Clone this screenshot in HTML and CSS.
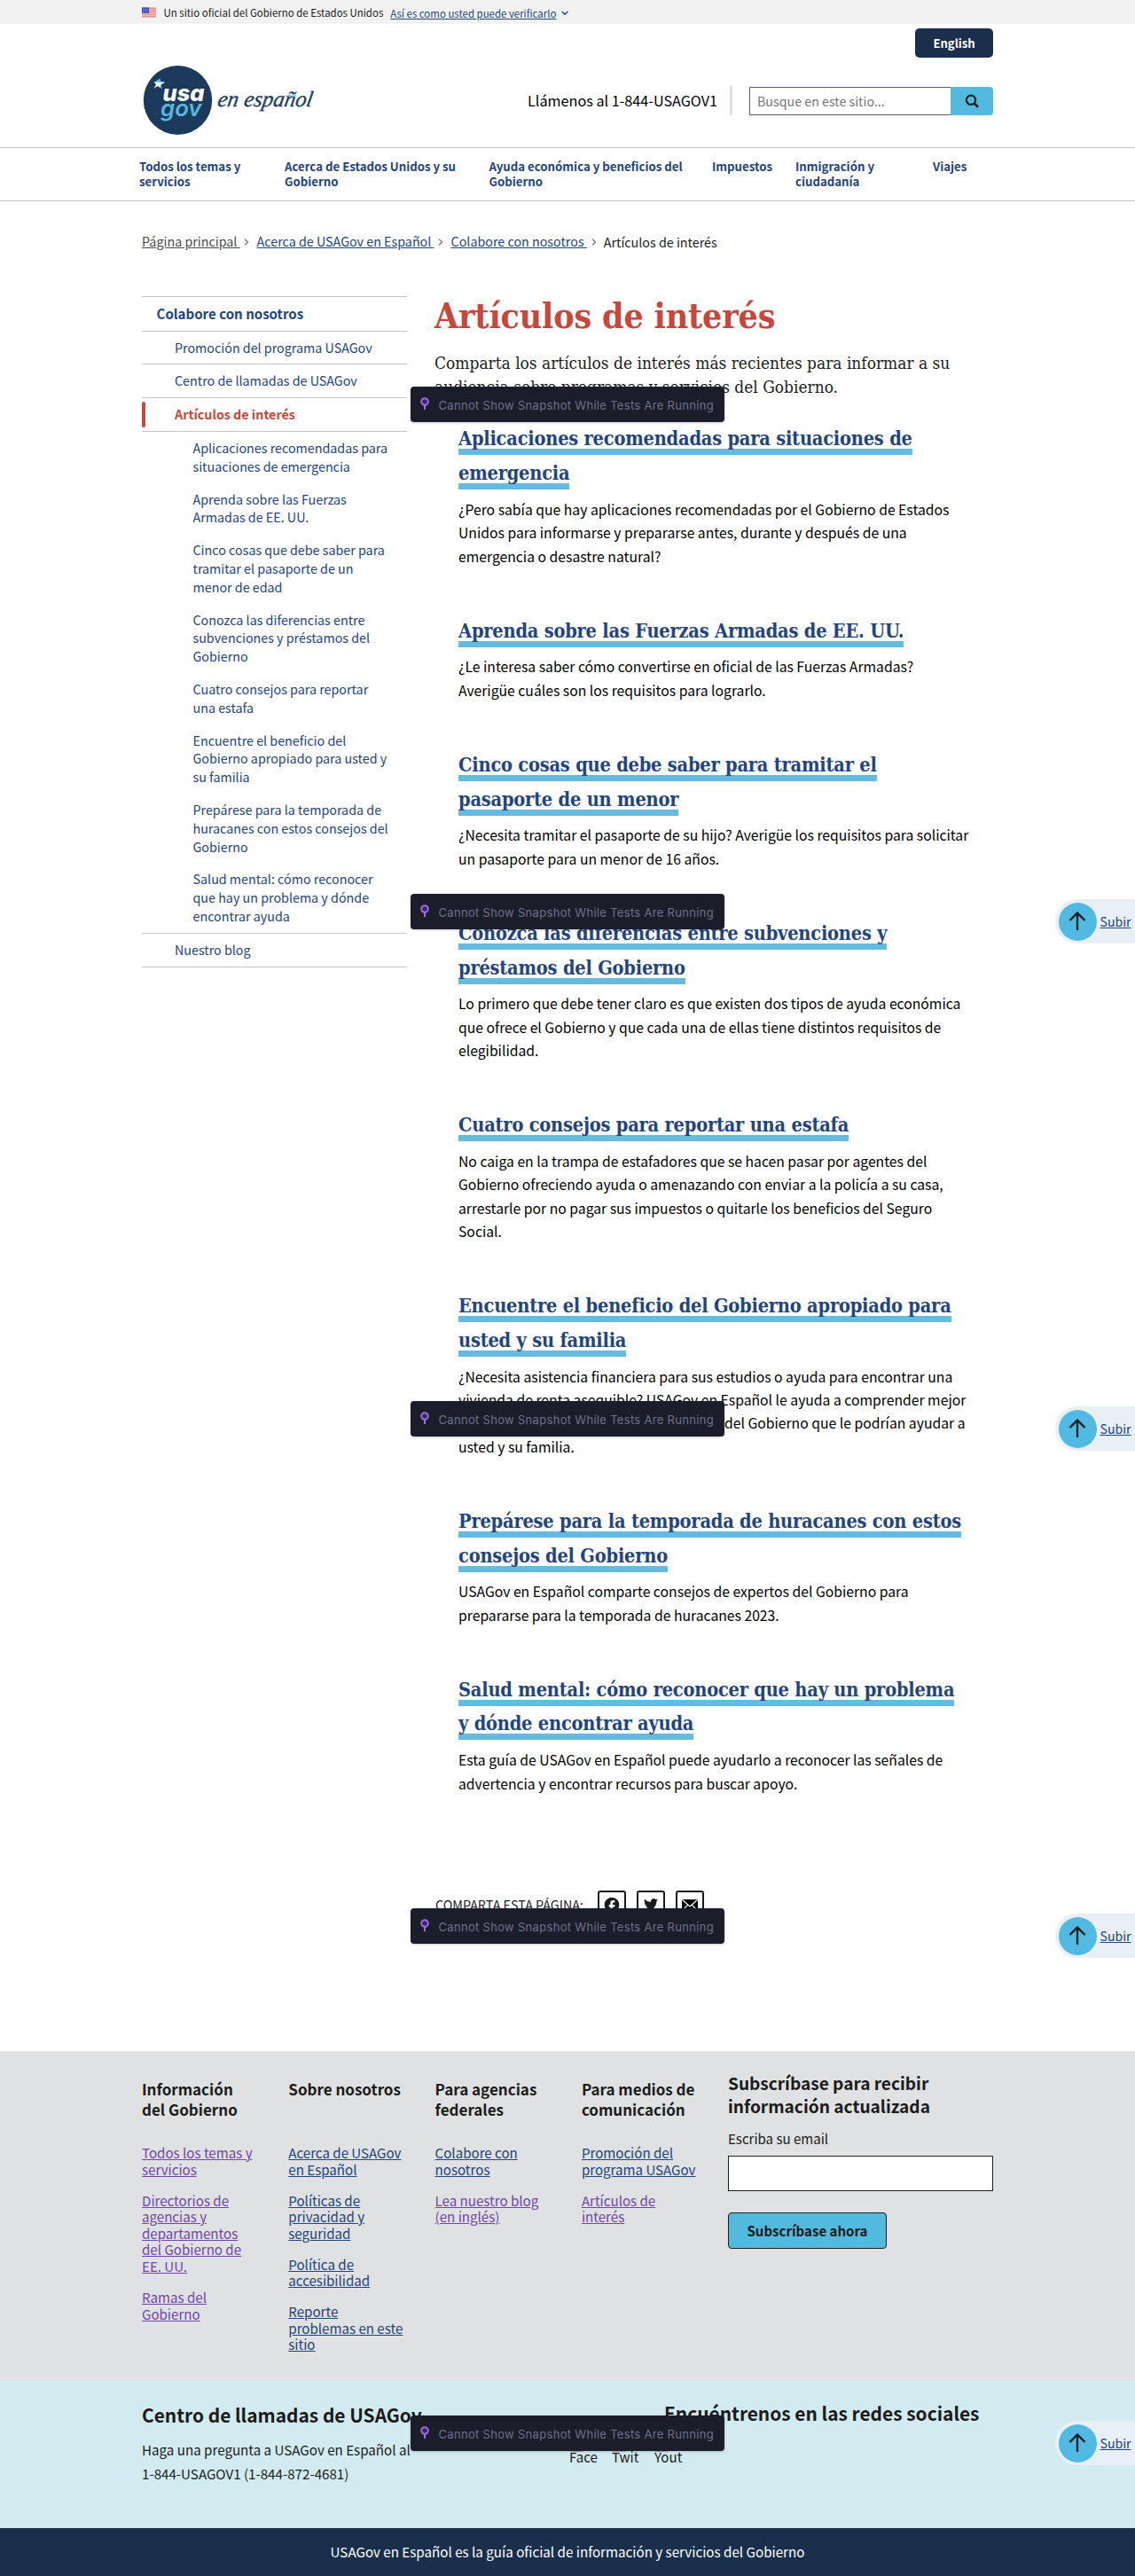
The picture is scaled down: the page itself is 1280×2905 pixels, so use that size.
FILE: index.html
```
<!DOCTYPE html>
<html lang="es">
<head>
<meta charset="utf-8">
<title>Artículos de interés | USAGov en Español</title>
<link rel="stylesheet" href="styles.css">
</head>
<body>
<svg class="sprite" aria-hidden="true">
  <symbol id="pin" viewBox="0 0 10 14"><circle cx="5" cy="5" r="3.8" fill="#3a2568" stroke="#9b6fdf" stroke-width="2"/><path d="M5 9v5" stroke="#9b6fdf" stroke-width="2"/></symbol>
  <symbol id="arrow-up" viewBox="0 0 20 22"><path d="M10 21V2M1.5 10 10 1.5 18.500 10" fill="none" stroke="#1b1b1b" stroke-width="2.3"/></symbol>
  <symbol id="broken" viewBox="0 0 16 16"><path d="M.5.500h10l5 5v10H.5z" fill="#fff" stroke="#a9a9a9"/><path d="M2 13l4-5 3 3 2-2 3 4z" fill="#5aa65a"/></symbol>
</svg>

<div class="banner">
  <div class="wrap banner-row">
    <svg class="flag" viewBox="0 0 16 11"><path fill="#fff" d="M0 0h16v11H0z"/><path d="M0 .6h16M0 2.500h16M0 4.400h16M0 6.400h16M0 8.400h16M0 10.400h16" stroke="#db4f42" stroke-width="1"/><path fill="#2a3fb8" d="M0 0h8v6.200H0z"/><path d="M1 1.500h6M1.500 3h6M1 4.500h6" stroke="#fff" stroke-width=".7" stroke-dasharray=".8 1"/></svg>
    <span class="banner-text">Un sitio oficial del Gobierno de Estados Unidos</span>
    <a class="banner-link">Así es como usted puede verificarlo</a>
    <svg class="chev" viewBox="0 0 8 6"><path d="M.7 1 4 4.300 7.300 1" fill="none" stroke="#22447f" stroke-width="1.500"/></svg>
  </div>
</div>

<header class="header">
  <div class="wrap">
    <div class="lang"><a class="lang-btn">English</a></div>
    <div class="brand-row">
      <svg class="logo" viewBox="0 0 200 78">
        <ellipse cx="40.500" cy="39" rx="38.700" ry="39" fill="#1c3a5b"/>
        <path d="M20.500 14.500l1.200 4.300 4.300.3-4 2.400.7 5-3.200-3-4-6z" fill="#54b9dd"/>
        <path d="M13.500 18.300l5.600.4 7-.5-5 3.200-.6 3.600-2.600-2-4.400 2.800 2.500-4.500z" fill="#fff"/>
        <text x="23.500" y="39.800" class="logo-usa" textLength="47" lengthAdjust="spacingAndGlyphs">usa</text>
        <text x="21" y="57" class="logo-gov" textLength="46.500" lengthAdjust="spacingAndGlyphs">gov</text>
        <text class="logo-es" transform="translate(84.500 46) skewX(-10)" textLength="107" lengthAdjust="spacingAndGlyphs">en español</text>
        <path d="M164 34.200c3-2 6 1.500 10-.4" stroke="#7fd0d8" stroke-width="1.800" fill="none"/>
      </svg>
      <div class="tools">
        <span class="phone">Llámenos al 1-844-USAGOV1</span>
        <span class="divider"></span>
        <div class="search">
          <div class="search-input">Busque en este sitio...</div>
          <div class="search-btn"><svg width="16" height="16" viewBox="0 0 16 16"><circle cx="7" cy="6.800" r="5.100" fill="none" stroke="#1b1b1b" stroke-width="2.200"/><path d="M10.700 10.500l4.300 4.400" stroke="#1b1b1b" stroke-width="2.600"/></svg></div>
        </div>
      </div>
    </div>
  </div>
</header>

<nav class="nav">
  <div class="nav-grid">
    <a>Todos los temas y<br>servicios</a>
    <a>Acerca de Estados Unidos y su<br>Gobierno</a>
    <a>Ayuda económica y beneficios del<br>Gobierno</a>
    <a>Impuestos</a>
    <a>Inmigración y<br>ciudadanía</a>
    <a>Viajes</a>
  </div>
</nav>

<div class="wrap crumbs">
  <a class="crumb-home">Página principal&nbsp;</a><svg class="sep" viewBox="0 0 6 8"><path d="M1 .7 4.600 4 1 7.300" fill="none" stroke="#71767a" stroke-width="1.300"/></svg>
  <a>Acerca de USAGov en Español&nbsp;</a><svg class="sep" viewBox="0 0 6 8"><path d="M1 .7 4.600 4 1 7.300" fill="none" stroke="#71767a" stroke-width="1.300"/></svg>
  <a>Colabore con nosotros&nbsp;</a><svg class="sep" viewBox="0 0 6 8"><path d="M1 .7 4.600 4 1 7.300" fill="none" stroke="#71767a" stroke-width="1.300"/></svg>
  <span class="crumb-here">Artículos de interés</span>
</div>

<div class="wrap page">
  <aside class="side">
    <a class="side-top">Colabore con nosotros</a>
    <a class="side-item">Promoción del programa USAGov</a>
    <a class="side-item">Centro de llamadas de USAGov</a>
    <a class="side-item current">Artículos de interés</a>
    <div class="side-sub">
      <a>Aplicaciones recomendadas para<br>situaciones de emergencia</a>
      <a>Aprenda sobre las Fuerzas<br>Armadas de EE. UU.</a>
      <a>Cinco cosas que debe saber para<br>tramitar el pasaporte de un<br>menor de edad</a>
      <a>Conozca las diferencias entre<br>subvenciones y préstamos del<br>Gobierno</a>
      <a>Cuatro consejos para reportar<br>una estafa</a>
      <a>Encuentre el beneficio del<br>Gobierno apropiado para usted y<br>su familia</a>
      <a>Prepárese para la temporada de<br>huracanes con estos consejos del<br>Gobierno</a>
      <a>Salud mental: cómo reconocer<br>que hay un problema y dónde<br>encontrar ayuda</a>
    </div>
    <a class="side-item last">Nuestro blog</a>
  </aside>

  <main class="main">
    <h1>Artículos de interés</h1>
    <p class="intro">Comparta los artículos de interés más recientes para informar a su<br>audiencia sobre programas y servicios del Gobierno.</p>
    <div class="articles">
      <article><h2><a>Aplicaciones recomendadas para situaciones de<br>emergencia</a></h2>
        <p>¿Pero sabía que hay aplicaciones recomendadas por el Gobierno de Estados<br>Unidos para informarse y prepararse antes, durante y después de una<br>emergencia o desastre natural?</p></article>
      <article><h2><a>Aprenda sobre las Fuerzas Armadas de EE. UU.</a></h2>
        <p>¿Le interesa saber cómo convertirse en oficial de las Fuerzas Armadas?<br>Averigüe cuáles son los requisitos para lograrlo.</p></article>
      <article><h2><a>Cinco cosas que debe saber para tramitar el<br>pasaporte de un menor</a></h2>
        <p>¿Necesita tramitar el pasaporte de su hijo? Averigüe los requisitos para solicitar<br>un pasaporte para un menor de 16 años.</p></article>
      <article><h2><a>Conozca las diferencias entre subvenciones y<br>préstamos del Gobierno</a></h2>
        <p>Lo primero que debe tener claro es que existen dos tipos de ayuda económica<br>que ofrece el Gobierno y que cada una de ellas tiene distintos requisitos de<br>elegibilidad.</p></article>
      <article><h2><a>Cuatro consejos para reportar una estafa</a></h2>
        <p>No caiga en la trampa de estafadores que se hacen pasar por agentes del<br>Gobierno ofreciendo ayuda o amenazando con enviar a la policía a su casa,<br>arrestarle por no pagar sus impuestos o quitarle los beneficios del Seguro<br>Social.</p></article>
      <article><h2><a>Encuentre el beneficio del Gobierno apropiado para<br>usted y su familia</a></h2>
        <p>¿Necesita asistencia financiera para sus estudios o ayuda para encontrar una<br>vivienda de renta asequible? USAGov en Español le ayuda a comprender mejor<br><span class="line-fit"><span>los diferentes programas y los beneficios</span><span>del Gobierno que le podrían ayudar a</span></span>usted y su familia.</p></article>
      <article><h2><a>Prepárese para la temporada de huracanes con estos<br>consejos del Gobierno</a></h2>
        <p>USAGov en Español comparte consejos de expertos del Gobierno para<br>prepararse para la temporada de huracanes 2023.</p></article>
      <article><h2><a>Salud mental: cómo reconocer que hay un problema<br>y dónde encontrar ayuda</a></h2>
        <p>Esta guía de USAGov en Español puede ayudarlo a reconocer las señales de<br>advertencia y encontrar recursos para buscar apoyo.</p></article>
    </div>
    <div class="share">
      <span class="share-label">COMPARTA ESTA PÁGINA:</span>
      <span class="share-btn"><svg width="20" height="20" viewBox="0 0 24 24"><path fill="#1b1b1b" d="M22 12c0-5.520-4.480-10-10-10S2 6.480 2 12c0 4.840 3.440 8.870 8 9.800V15H8v-3h2V9.500C10 7.570 11.570 6 13.500 6H16v3h-2c-.55 0-1 .45-1 1v2h3v3h-3v6.950c5.050-.5 9-4.760 9-9.950z"/></svg></span>
      <span class="share-btn"><svg width="20" height="20" viewBox="0 0 24 24"><path fill="#1b1b1b" d="M21.500 5.500a7.800 7.800 0 0 1-2.240.61 3.900 3.900 0 0 0 1.710-2.160 7.800 7.800 0 0 1-2.470.95 3.900 3.900 0 0 0-6.650 3.550 11.060 11.060 0 0 1-8.030-4.070 3.900 3.900 0 0 0 1.210 5.200 3.900 3.900 0 0 1-1.770-.49v.05a3.900 3.900 0 0 0 3.130 3.820 3.900 3.900 0 0 1-1.760.07 3.900 3.900 0 0 0 3.640 2.700A7.820 7.820 0 0 1 2.500 17.350a11.030 11.030 0 0 0 5.970 1.750c7.170 0 11.090-5.940 11.090-11.090l-.01-.5A7.900 7.900 0 0 0 21.500 5.500z"/></svg></span>
      <span class="share-btn"><svg width="20" height="20" viewBox="0 0 20 20"><path d="M1 4h18v13H1z"/><path d="M1.500 4.500 10 12l8.500-7.500M1.500 16.500l6.300-6.300M18.500 16.500l-6.300-6.300" fill="none" stroke="#fff" stroke-width="1.200"/></svg></span>
    </div>
  </main>
</div>

<footer>
  <div class="foot-links">
    <div class="wrap foot-grid">
      <section class="visited"><h3>Información<br>del Gobierno</h3>
        <a>Todos los temas y<br>servicios</a><a>Directorios de<br>agencias y<br>departamentos<br>del Gobierno de<br>EE. UU.</a><a>Ramas del<br>Gobierno</a></section>
      <section><h3>Sobre nosotros</h3>
        <a>Acerca de USAGov<br>en Español</a><a>Políticas de<br>privacidad y<br>seguridad</a><a>Política de<br>accesibilidad</a><a>Reporte<br>problemas en este<br>sitio</a></section>
      <section><h3>Para agencias<br>federales</h3>
        <a>Colabore con<br>nosotros</a><a class="seen">Lea nuestro blog<br>(en inglés)</a></section>
      <section><h3>Para medios de<br>comunicación</h3>
        <a>Promoción del<br>programa USAGov</a><a class="seen">Artículos de<br>interés</a></section>
      <form class="subscribe">
        <h2>Subscríbase para recibir<br>información actualizada</h2>
        <label for="email">Escriba su email</label>
        <input id="email" type="text">
        <button type="button">Subscríbase ahora</button>
      </form>
    </div>
  </div>
  <div class="foot-contact">
    <div class="wrap contact-grid">
      <section>
        <h2>Centro de llamadas de USAGov</h2>
        <p>Haga una pregunta a USAGov en Español al<br>1-844-USAGOV1 (1-844-872-4681)</p>
      </section>
      <section class="social">
        <h2>Encuéntrenos en las redes sociales</h2>
        <div class="social-row">
          <span><svg width="16" height="16"><use href="#broken"/></svg>Face</span>
          <span><svg width="16" height="16"><use href="#broken"/></svg>Twit</span>
          <span><svg width="16" height="16"><use href="#broken"/></svg>Yout</span>
        </div>
      </section>
    </div>
  </div>
  <div class="foot-tag">USAGov en Español es la guía oficial de información y servicios del Gobierno</div>
</footer>

<div class="toast t1"><svg width="10" height="14"><use href="#pin"/></svg>Cannot Show Snapshot While Tests Are Running</div>
<div class="toast t2"><svg width="10" height="14"><use href="#pin"/></svg>Cannot Show Snapshot While Tests Are Running</div>
<div class="toast t3"><svg width="10" height="14"><use href="#pin"/></svg>Cannot Show Snapshot While Tests Are Running</div>
<div class="toast t4"><svg width="10" height="14"><use href="#pin"/></svg>Cannot Show Snapshot While Tests Are Running</div>
<div class="toast t5"><svg width="10" height="14"><use href="#pin"/></svg>Cannot Show Snapshot While Tests Are Running</div>

<a class="top-link u1"><span class="top-dot"><svg width="20" height="22"><use href="#arrow-up"/></svg></span><span class="top-text">Subir</span></a>
<a class="top-link u2"><span class="top-dot"><svg width="20" height="22"><use href="#arrow-up"/></svg></span><span class="top-text">Subir</span></a>
<a class="top-link u3"><span class="top-dot"><svg width="20" height="22"><use href="#arrow-up"/></svg></span><span class="top-text">Subir</span></a>
<a class="top-link u4"><span class="top-dot"><svg width="20" height="22"><use href="#arrow-up"/></svg></span><span class="top-text">Subir</span></a>
</body>
</html>
```
FILE: styles.css
```
* { box-sizing: border-box; }
body {
  margin: 0;
  position: relative;
  height: 2905px;
  overflow-x: hidden;
  background: #fff;
  color: #1b1b1b;
  font-family: "Noto Sans CJK SC", "Open Sans", sans-serif;
  white-space: nowrap;
}
h1, h2, h3, p { margin: 0; }
a { color: #22447f; }
svg { display: block; flex: none; }
.sprite { position: absolute; width: 0; height: 0; }
.wrap { width: 960px; margin: 0 auto; }

/* Government banner */
.banner { height: 27px; background: #f2f2f2; }
.banner-row { display: flex; height: 27px; align-items: center; font-size: 11.45px; line-height: 16px; }
.flag { width: 16px; height: 12px; margin-top: 1px; }
.banner-text { margin-left: 8.5px; }
.banner-link { margin: 2px 6px 0 8px; text-decoration: underline; }
.chev { width: 8px; height: 6px; margin-top: 3px; }

/* Header */
.header { height: 140px; border-bottom: 1px solid #c6c6c6; padding-top: 5px; }
.lang { display: flex; justify-content: flex-end; }
.lang-btn {
  width: 88px; height: 33px; border-radius: 5px; background: #1a2f4b; color: #fff;
  font-weight: 700; font-size: 13.1px; line-height: 34px; text-align: center;
}
.brand-row { display: flex; justify-content: space-between; align-items: center; height: 78px; margin-top: 9px; }
.logo { width: 200px; height: 78px; overflow: visible; }
.logo-usa { font: italic 800 26px Inter, sans-serif; fill: #fff; }
.logo-gov { font: italic 600 25px Inter, sans-serif; fill: #54b9dd; }
.logo-es { font: italic 25px "Liberation Serif", serif; fill: #1c3a5b; stroke: #1c3a5b; stroke-width: .3px; }
.tools { display: flex; align-items: center; }
.phone { font-size: 16.2px; line-height: 24px; color: #000; }
.divider { width: 3px; height: 33px; margin: 0 19px 0 14px; background: #dfe1e2; }
.search { display: flex; width: 275px; height: 32px; margin-top: 2px; }
.search-input { flex: 1; border: 1px solid #565c65; border-right: 0; padding-left: 8px; color: #757575; font-size: 14.25px; line-height: 30px; }
.search-btn { display: flex; width: 48px; align-items: center; justify-content: center; border-radius: 0 4px 4px 0; background: #52b9df; }

/* Primary navigation */
.nav { height: 60px; border-bottom: 1px solid #c6c6c6; padding-top: 11.5px; }
.nav-grid {
  display: grid; grid-template-columns: 164px 230.5px 251.5px 94px 155px auto;
  margin-left: 157px; font-weight: 700; font-size: 13.22px; line-height: 17px;
}

/* Breadcrumb */
.crumbs { display: flex; height: 105px; padding-top: 34.5px; align-items: flex-start; font-size: 14.3px; line-height: 20px; }
.crumbs a { text-decoration: underline; }
.crumbs .crumb-home { color: #4a4a4a; }
.sep { width: 6px; height: 8px; margin: 7px 8.200px 0 4.800px; }
.crumb-here { padding-top: 1px; }

/* Page body */
.page { display: flex; height: 1981px; }
.side { width: 299px; margin-right: 31px; padding-top: 2px; font-size: 14.3px; line-height: 20.8px; }
.side a { display: block; }
.side-top { border-top: 1px solid #c6c6c6; padding: 8px 16.500px; font-weight: 700; font-size: 15.07px; line-height: 21.6px; }
.side-item { position: relative; border-top: 1px solid #c6c6c6; padding: 8px 0 8px 37px; }
.side-item.last { border-bottom: 1px solid #c6c6c6; }
.side .side-item.current { color: #c8463a; font-weight: 700; }
.side-item.current::before { content: ""; position: absolute; left: 0; top: 4px; bottom: 4px; width: 4px; border-radius: 4px; background: #c8463a; }
.side-sub { border-top: 1px solid #c6c6c6; }
.side-sub a { padding: 8px 0 8px 57.5px; }

.main { flex: 1; }
h1 { color: #c8463a; font: 700 39px/48px "DejaVu Serif Condensed", "DejaVu Serif", serif; letter-spacing: -.18px; }
.intro { margin-top: 15.8px; font: 18.97px/27.2px "DejaVu Serif Condensed", "DejaVu Serif", serif; }
.articles { padding: 26.2px 0 0 27px; }
article { margin-bottom: 51.7px; }
article h2 { margin-bottom: 8px; font: 700 21.6px/38.7px "DejaVu Serif Condensed", "DejaVu Serif", serif; letter-spacing: -.2px; }
article h2 a {
  padding-bottom: 6px;
  background: linear-gradient(#66b9df, #66b9df) left bottom / 100% 7px no-repeat;
  -webkit-box-decoration-break: clone;
  box-decoration-break: clone;
}
article p { color: #000; font-size: 15.73px; line-height: 26.4px; }
.line-fit { display: flex; width: 571.5px; justify-content: space-between; }
.share { display: flex; align-items: center; gap: 12px; margin-top: 107.5px; padding-left: 1px; }
article:last-child { margin-bottom: 0; }
.share-label { margin-right: 4px; font-size: 14.32px; line-height: 20px; }
.share-btn { display: flex; width: 32px; height: 32px; align-items: center; justify-content: center; border: 2px solid #1b1b1b; border-radius: 3px; }

/* Footer */
.foot-links { height: 372px; background: #dfe1e2; }
.foot-grid { display: grid; grid-template-columns: 165.3px 165.3px 165.3px 165.1px 299px; }
.foot-grid section { padding-top: 31px; }
.foot-grid h3 { height: 46px; margin-bottom: 28px; font-size: 17px; line-height: 23px; }
.foot-grid a { display: block; margin-bottom: 16.2px; font-size: 15.1px; line-height: 18.65px; text-decoration: underline; }
.visited a, .foot-grid .seen { color: #7044b5; }
.subscribe { padding-top: 22.7px; }
.subscribe h2 { font-size: 19.1px; line-height: 26px; }
.subscribe label { display: block; margin: 14.3px 0 8.8px; font-size: 15.05px; line-height: 20px; }
.subscribe input { display: block; width: 299px; height: 40px; border: 1px solid #1b1b1b; border-radius: 0; background: #fff; }
.subscribe button {
  display: block; width: 179px; height: 41px; margin-top: 24px; padding: 0;
  border: 1px solid #1b1b1b; border-radius: 4px; background: #52b9df; color: #1b1b1b;
  font: 700 15.05px/39px "Noto Sans CJK SC", sans-serif;
}
.foot-contact { height: 166px; background: #d2ebf0; }
.contact-grid { display: grid; grid-template-columns: 482px 478px; padding-top: 24px; }
.contact-grid h2 { font-size: 20.9px; line-height: 28px; }
.contact-grid p { margin-top: 12px; font-size: 15.15px; line-height: 27px; }
.social { margin-top: -2px; }
.social h2 { padding-left: 107px; }
.social-row { display: flex; gap: 16px; margin-top: 14px; font-size: 15.1px; line-height: 11px; }
.social-row span { width: 32px; }
.foot-tag { height: 54px; background: #1a2f4b; color: #fff; font-size: 15.16px; line-height: 53px; text-align: center; }

/* Snapshot notices, laid over the page at every viewport height */
.toast {
  position: absolute; left: 463px; display: flex; width: 354px; height: 40px; align-items: center;
  gap: 11px; padding: 2px 0 0 10.500px; border-radius: 4px; background: #1c1d2b; color: #6e7089;
  box-shadow: 0 1px 3px rgba(0, 0, 0, .2); font: 13px/18px Inter, sans-serif; letter-spacing: .31px;
}
.toast svg { margin-top: -4px; }
.t1 { top: 436px; }
.t2 { top: 1008px; }
.t3 { top: 1580px; }
.t4 { top: 2152px; }
.t5 { top: 2724px; }

/* Back-to-top tab on the right edge */
.top-link {
  position: absolute; right: 0; display: flex; width: 90px; height: 50px; align-items: center; gap: 4px;
  padding-left: 3.500px; border-radius: 25px 0 0 25px; background: #e8f0f6; font-size: 14.1px; line-height: 20px;
}
.top-dot { display: flex; width: 43px; height: 43px; align-items: center; justify-content: center; border-radius: 50%; background: #52b9e2; }
.top-text { text-decoration: underline; }
.u1 { top: 1014px; }
.u2 { top: 1586px; }
.u3 { top: 2158px; }
.u4 { top: 2730px; }
```
